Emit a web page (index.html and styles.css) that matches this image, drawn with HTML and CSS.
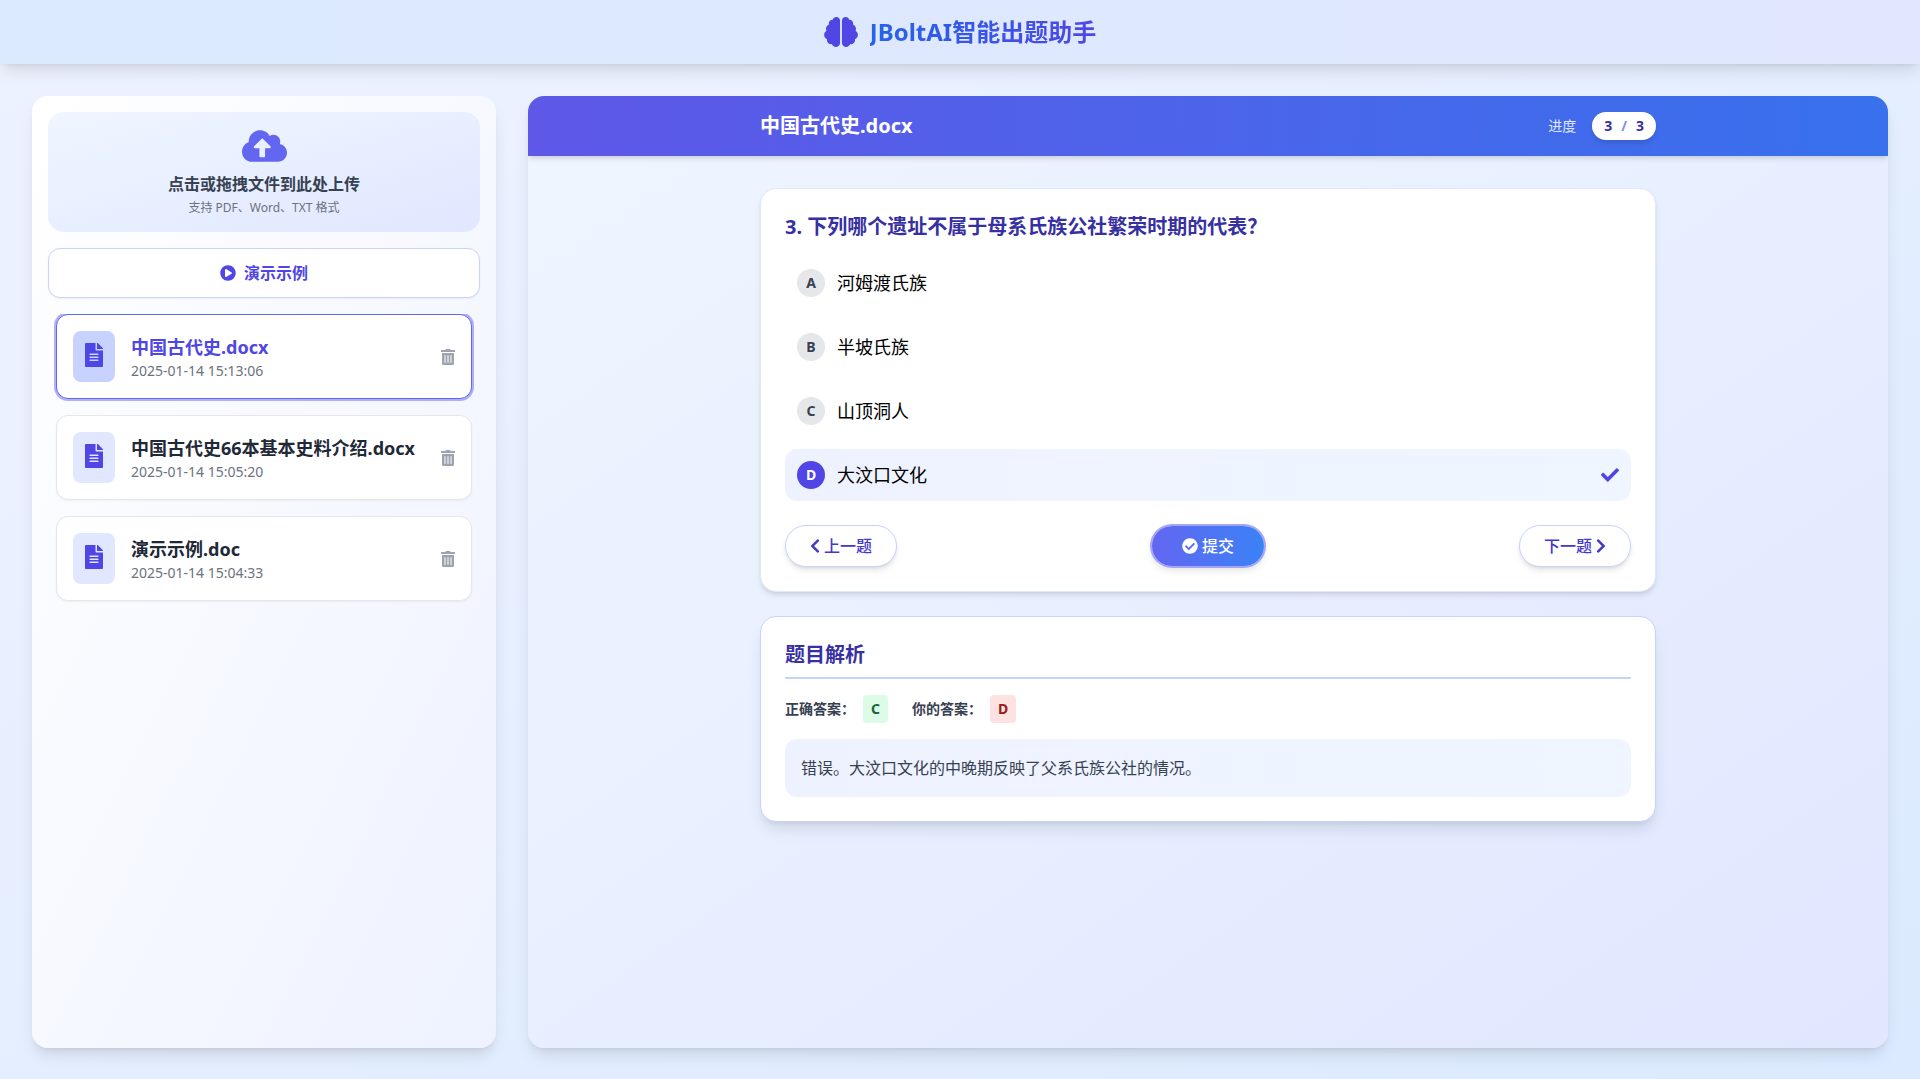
FILE: index.html
```html
<!DOCTYPE html>
<html lang="zh-CN">
<head>
<meta charset="UTF-8">
<meta name="viewport" content="width=device-width, initial-scale=1">
<title>JBoltAI智能出题助手</title>
<link rel="stylesheet" href="styles.css">
</head>
<body>
<svg class="sprite" aria-hidden="true">
  <symbol id="i-file" viewBox="0 0 384 512"><path d="M224 136V0H24C10.700 0 0 10.700 0 24v464c0 13.300 10.700 24 24 24h336c13.300 0 24-10.700 24-24V160H248c-13.200 0-24-10.800-24-24zm64 236c0 6.600-5.400 12-12 12H108c-6.600 0-12-5.400-12-12v-8c0-6.600 5.400-12 12-12h168c6.600 0 12 5.400 12 12v8zm0-64c0 6.600-5.400 12-12 12H108c-6.600 0-12-5.400-12-12v-8c0-6.600 5.400-12 12-12h168c6.600 0 12 5.400 12 12v8zm0-72v8c0 6.600-5.400 12-12 12H108c-6.600 0-12-5.400-12-12v-8c0-6.600 5.400-12 12-12h168c6.600 0 12 5.400 12 12zm96-114.100v6.100H256V0h6.100c6.400 0 12.500 2.500 17 7l97.900 98c4.500 4.500 7 10.600 7 16.900z"/></symbol>
  <symbol id="i-trash" viewBox="0 0 448 512"><path d="M32 464a48 48 0 0 0 48 48h288a48 48 0 0 0 48-48V128H32zm272-256a16 16 0 0 1 32 0v224a16 16 0 0 1-32 0zm-96 0a16 16 0 0 1 32 0v224a16 16 0 0 1-32 0zm-96 0a16 16 0 0 1 32 0v224a16 16 0 0 1-32 0zM432 32H312l-9.400-18.700A24 24 0 0 0 281.100 0H166.800a23.720 23.720 0 0 0-21.400 13.300L136 32H16A16 16 0 0 0 0 48v32a16 16 0 0 0 16 16h416a16 16 0 0 0 16-16V48a16 16 0 0 0-16-16z"/></symbol>
</svg>

<header class="topbar">
  <svg class="topbar-logo" viewBox="0 0 576 512" aria-hidden="true"><path d="M208 0c-29.900 0-54.700 20.500-61.800 48.200-.8 0-1.400-.2-2.200-.2-35.300 0-64 28.700-64 64 0 4.800.6 9.500 1.700 14C52.500 138 32 166.600 32 200c0 12.600 3.200 24.300 8.300 34.900C16.300 248.700 0 274.300 0 304c0 33.300 20.400 61.900 49.400 73.900-.9 4.600-1.400 9.300-1.400 14.100 0 39.800 32.200 72 72 72 4.100 0 8.100-.5 12-1.200 9.600 28.500 36.200 49.200 68 49.200 39.800 0 72-32.200 72-72V64c0-35.300-28.700-64-64-64zm368 304c0-29.700-16.300-55.300-40.300-69.100 5.200-10.600 8.300-22.300 8.300-34.900 0-33.400-20.500-62-49.700-74 1-4.500 1.700-9.200 1.700-14 0-35.300-28.700-64-64-64-.8 0-1.500.2-2.200.2C422.700 20.500 397.900 0 368 0c-35.300 0-64 28.600-64 64v376c0 39.800 32.200 72 72 72 31.800 0 58.400-20.700 68-49.200 3.900.7 7.900 1.200 12 1.200 39.800 0 72-32.200 72-72 0-4.800-.5-9.500-1.400-14.100 29-12 49.400-40.600 49.400-73.900z"/></svg>
  <h1 class="topbar-title">JBoltAI智能出题助手</h1>
</header>

<main class="layout">
  <aside class="sidebar">
    <label class="upload" for="file-input">
      <input class="sr-only" type="file" id="file-input" accept=".pdf,.doc,.docx,.txt">
      <svg class="upload-icon" viewBox="0 0 640 512" aria-hidden="true"><path d="M537.600 226.600c4.100-10.700 6.400-22.400 6.400-34.600 0-53-43-96-96-96-19.700 0-38.100 6-53.300 16.200C367 64.200 315.300 32 256 32c-88.400 0-160 71.600-160 160 0 2.700.1 5.400.2 8.100C40.200 219.800 0 273.200 0 336c0 79.500 64.500 144 144 144h368c70.700 0 128-57.300 128-128 0-61.900-44-113.600-102.400-125.400zM393.400 288H328v112c0 8.800-7.200 16-16 16h-48c-8.800 0-16-7.200-16-16V288h-65.400c-14.300 0-21.400-17.200-11.300-27.300l105.400-105.400c6.200-6.200 16.400-6.200 22.600 0l105.400 105.400c10.100 10.100 2.900 27.300-11.300 27.300z"/></svg>
      <span class="upload-title">点击或拖拽文件到此处上传</span>
      <span class="upload-hint">支持 PDF、Word、TXT 格式</span>
    </label>

    <button class="demo-button" type="button">
      <svg class="icon" viewBox="0 0 512 512" aria-hidden="true"><path d="M256 8C119 8 8 119 8 256s111 248 248 248 248-111 248-248S393 8 256 8zm115.700 272l-176 101c-15.800 8.800-35.700-2.500-35.700-21V152c0-18.400 19.800-29.800 35.700-21l176 107c16.400 9.200 16.400 32.900 0 42z"/></svg>
      演示示例
    </button>

    <ul class="files">
      <li class="file file-active">
        <span class="file-icon"><svg viewBox="0 0 384 512" aria-hidden="true"><use href="#i-file"/></svg></span>
        <div class="file-text">
          <h2 class="file-name">中国古代史.docx</h2>
          <time class="file-date">2025-01-14 15:13:06</time>
        </div>
        <button class="file-delete" type="button" aria-label="删除"><svg viewBox="0 0 448 512" aria-hidden="true"><use href="#i-trash"/></svg></button>
      </li>
      <li class="file">
        <span class="file-icon"><svg viewBox="0 0 384 512" aria-hidden="true"><use href="#i-file"/></svg></span>
        <div class="file-text">
          <h2 class="file-name">中国古代史66本基本史料介绍.docx</h2>
          <time class="file-date">2025-01-14 15:05:20</time>
        </div>
        <button class="file-delete" type="button" aria-label="删除"><svg viewBox="0 0 448 512" aria-hidden="true"><use href="#i-trash"/></svg></button>
      </li>
      <li class="file">
        <span class="file-icon"><svg viewBox="0 0 384 512" aria-hidden="true"><use href="#i-file"/></svg></span>
        <div class="file-text">
          <h2 class="file-name">演示示例.doc</h2>
          <time class="file-date">2025-01-14 15:04:33</time>
        </div>
        <button class="file-delete" type="button" aria-label="删除"><svg viewBox="0 0 448 512" aria-hidden="true"><use href="#i-trash"/></svg></button>
      </li>
    </ul>
  </aside>

  <section class="quiz">
    <header class="quiz-header">
      <div class="container quiz-header-row">
        <h2 class="quiz-title">中国古代史.docx</h2>
        <div class="progress">
          <span class="progress-label">进度</span>
          <span class="progress-pill"><span>3</span><span class="progress-slash">/</span><span>3</span></span>
        </div>
      </div>
    </header>

    <div class="container quiz-body">
      <form class="card">
        <h3 class="card-title" id="question">3. 下列哪个遗址不属于母系氏族公社繁荣时期的代表？</h3>
        <div class="options" role="radiogroup" aria-labelledby="question">
          <label class="option" for="opt-a">
            <input class="sr-only" type="radio" name="answer" id="opt-a">
            <span class="option-key">A</span>
            <span class="option-text">河姆渡氏族</span>
          </label>
          <label class="option" for="opt-b">
            <input class="sr-only" type="radio" name="answer" id="opt-b">
            <span class="option-key">B</span>
            <span class="option-text">半坡氏族</span>
          </label>
          <label class="option" for="opt-c">
            <input class="sr-only" type="radio" name="answer" id="opt-c">
            <span class="option-key">C</span>
            <span class="option-text">山顶洞人</span>
          </label>
          <label class="option option-selected" for="opt-d">
            <input class="sr-only" type="radio" name="answer" id="opt-d" checked>
            <span class="option-key">D</span>
            <span class="option-text">大汶口文化</span>
            <svg class="option-check" viewBox="0 0 512 512" aria-hidden="true"><path d="M173.898 439.404l-166.400-166.400c-9.997-9.997-9.997-26.206 0-36.204l36.203-36.204c9.997-9.998 26.207-9.998 36.204 0L192 312.690 432.095 72.596c9.997-9.997 26.207-9.997 36.204 0l36.203 36.204c9.997 9.997 9.997 26.206 0 36.204l-294.400 294.401c-9.998 9.997-26.207 9.997-36.204-.001z"/></svg>
          </label>
        </div>
        <div class="actions">
          <button class="button" type="button">
            <svg class="icon-chevron" viewBox="0 0 320 512" aria-hidden="true"><path d="M34.520 239.030L228.870 44.690c9.370-9.370 24.570-9.370 33.940 0l22.670 22.670c9.360 9.360 9.370 24.520.04 33.900L131.490 256l154.020 154.750c9.340 9.380 9.320 24.540-.04 33.900l-22.670 22.670c-9.370 9.370-24.570 9.370-33.940 0L34.520 272.970c-9.370-9.370-9.370-24.570 0-33.940z"/></svg>
            上一题
          </button>
          <button class="button button-primary" type="button">
            <svg class="icon" viewBox="0 0 512 512" aria-hidden="true"><path d="M504 256c0 136.967-111.033 248-248 248S8 392.967 8 256 119.033 8 256 8s248 111.033 248 248zM227.314 387.314l184-184c6.248-6.248 6.248-16.379 0-22.627l-22.627-22.627c-6.248-6.248-16.379-6.249-22.628 0L216 308.118l-70.059-70.059c-6.248-6.248-16.379-6.248-22.628 0l-22.627 22.627c-6.248 6.248-6.248 16.379 0 22.627l104 104c6.249 6.249 16.379 6.249 22.628.001z"/></svg>
            提交
          </button>
          <button class="button" type="button">
            下一题
            <svg class="icon-chevron" viewBox="0 0 320 512" aria-hidden="true"><path d="M285.480 272.970L91.130 467.310c-9.370 9.370-24.570 9.370-33.940 0l-22.670-22.670c-9.360-9.360-9.370-24.520-.04-33.900L188.510 256 34.490 101.250c-9.340-9.380-9.320-24.540.04-33.900l22.670-22.670c9.370-9.370 24.570-9.370 33.940 0L285.480 239.030c9.370 9.370 9.370 24.570 0 33.940z"/></svg>
          </button>
        </div>
      </form>

      <section class="card card-analysis">
        <h3 class="card-title card-title-ruled">题目解析</h3>
        <dl class="answers">
          <div class="answer">
            <dt>正确答案：</dt>
            <dd class="answer-value answer-right">C</dd>
          </div>
          <div class="answer">
            <dt>你的答案：</dt>
            <dd class="answer-value answer-wrong">D</dd>
          </div>
        </dl>
        <p class="explanation">错误。大汶口文化的中晚期反映了父系氏族公社的情况。</p>
      </section>
    </div>
  </section>
</main>
</body>
</html>
```
FILE: styles.css
```css
*, *::before, *::after { box-sizing: border-box; }

body {
  display: flex;
  flex-direction: column;
  min-height: 100vh;
  margin: 0;
  background: linear-gradient(to bottom right, #eef2ff, #dbeafe);
  color: #000;
  font-family: "Noto Sans", "Noto Sans CJK SC", sans-serif;
  font-size: 16px;
  line-height: 24px;
}

h1, h2, h3, p, ul, dl, dd { margin: 0; padding: 0; }

button {
  font: inherit;
  cursor: pointer;
}

svg {
  display: block;
  flex: none;
  fill: currentColor;
}

.sprite { display: none; }

.sr-only {
  position: absolute;
  width: 1px;
  height: 1px;
  margin: 0;
  overflow: hidden;
  opacity: 0;
}

.icon {
  width: 16px;
  height: 16px;
}

.icon-chevron {
  width: 10px;
  height: 16px;
}

/* Top bar */
.topbar {
  display: flex;
  align-items: center;
  justify-content: center;
  gap: 12px;
  padding: 16px;
  background: linear-gradient(to right, #dbeafe, #e0e7ff);
  box-shadow: 0 10px 15px -3px rgba(0, 0, 0, 0.1), 0 4px 6px -4px rgba(0, 0, 0, 0.1);
}

.topbar-logo {
  width: 34px;
  height: 30px;
  color: #4f46e5;
}

.topbar-title {
  background: linear-gradient(to right, #2563eb, #4f46e5);
  background-clip: text;
  -webkit-background-clip: text;
  color: transparent;
  font-size: 24px;
  font-weight: 700;
  line-height: 32px;
}

.layout {
  display: flex;
  flex: 1;
  gap: 32px;
  padding: 32px 32px 31px;
}

/* Sidebar */
.sidebar {
  display: flex;
  flex: none;
  flex-direction: column;
  gap: 16px;
  width: 25%;
  padding: 16px;
  border-radius: 16px;
  background: linear-gradient(to bottom right, #fff, #eef2ff);
  box-shadow: 0 10px 15px -3px rgba(0, 0, 0, 0.1), 0 4px 6px -4px rgba(0, 0, 0, 0.1);
}

.upload {
  display: flex;
  flex-direction: column;
  align-items: center;
  padding: 16px;
  border-radius: 16px;
  background: linear-gradient(to bottom right, #eff6ff, #e0e7ff);
  cursor: pointer;
}

.upload-icon {
  width: 45px;
  height: 36px;
  margin-bottom: 8px;
  color: #6366f1;
}

.upload-title {
  margin-bottom: 4px;
  color: #374151;
  font-weight: 600;
}

.upload-hint {
  color: #6b7280;
  font-size: 12px;
  line-height: 16px;
}

.demo-button {
  display: flex;
  align-items: center;
  justify-content: center;
  gap: 8px;
  padding: 12px 16px;
  border: 1px solid #c7d2fe;
  border-radius: 12px;
  background: #fff;
  box-shadow: 0 1px 2px rgba(0, 0, 0, 0.05);
  color: #4f46e5;
  font-weight: 600;
}

.files {
  display: flex;
  flex: 1;
  flex-direction: column;
  gap: 16px;
  padding: 0 8px;
  overflow-y: auto;
  list-style: none;
}

.file {
  display: flex;
  align-items: center;
  gap: 16px;
  padding: 16px;
  border: 1px solid #e5e7eb;
  border-radius: 12px;
  background: #fff;
  box-shadow: 0 1px 2px rgba(0, 0, 0, 0.05);
}

.file-icon {
  padding: 12px 12px 15px;
  border-radius: 8px;
  background: #e0e7ff;
  color: #4f46e5;
}

.file-icon svg {
  width: 18px;
  height: 24px;
}

.file-text {
  flex: 1;
  min-width: 0;
}

.file-name {
  overflow: hidden;
  color: #1f2937;
  font-size: 18px;
  font-weight: 700;
  line-height: 28px;
  text-overflow: ellipsis;
  white-space: nowrap;
}

.file-date {
  display: block;
  color: #6b7280;
  font-size: 14px;
  line-height: 20px;
}

.file-delete {
  padding: 0;
  border: 0;
  background: none;
  color: #9ca3af;
}

.file-delete svg {
  width: 14px;
  height: 16px;
}

.file-active {
  border-color: #6366f1;
  box-shadow: 0 0 0 2px rgba(99, 102, 241, 0.5);
}

.file-active .file-icon { background: #c7d2fe; }
.file-active .file-name { color: #4f46e5; }

/* Quiz panel */
.quiz {
  flex: 1;
  min-width: 0;
  overflow: hidden;
  border-radius: 16px;
  background: linear-gradient(to bottom right, #eff6ff, #e0e7ff);
  box-shadow: 0 10px 15px -3px rgba(0, 0, 0, 0.1), 0 4px 6px -4px rgba(0, 0, 0, 0.1);
}

.container {
  width: 100%;
  max-width: 896px;
  margin: 0 auto;
}

.quiz-header {
  padding: 16px;
  background: linear-gradient(to right, rgba(79, 70, 229, 0.9), rgba(37, 99, 235, 0.9));
  box-shadow: 0 4px 6px -1px rgba(0, 0, 0, 0.1), 0 2px 4px -2px rgba(0, 0, 0, 0.1);
  color: #fff;
}

.quiz-header-row {
  display: flex;
  align-items: center;
  justify-content: space-between;
}

.quiz-title {
  font-size: 20px;
  font-weight: 700;
  line-height: 28px;
}

.progress {
  display: flex;
  align-items: center;
  gap: 16px;
  font-size: 14px;
  line-height: 20px;
}

.progress-label { color: #e0e7ff; }

.progress-pill {
  display: flex;
  gap: 9px;
  padding: 4px 12px;
  border-radius: 14px;
  background: #fff;
  box-shadow: 0 4px 6px -1px rgba(0, 0, 0, 0.1), 0 2px 4px -2px rgba(0, 0, 0, 0.1);
  color: #3730a3;
  font-weight: 700;
}

.progress-slash { color: #818cf8; }

.quiz-body {
  display: flex;
  flex-direction: column;
  gap: 24px;
  padding: 32px 0;
}

.card {
  padding: 24px;
  border: 1px solid #e0e7ff;
  border-radius: 16px;
  background: #fff;
  box-shadow: 0 4px 6px -1px rgba(0, 0, 0, 0.1), 0 2px 4px -2px rgba(0, 0, 0, 0.1);
}

.card-analysis {
  border-color: #c7d2fe;
  box-shadow: 0 10px 15px -3px rgba(0, 0, 0, 0.1), 0 4px 6px -4px rgba(0, 0, 0, 0.1);
}

.card-title {
  margin-bottom: 16px;
  color: #3730a3;
  font-size: 20px;
  font-weight: 700;
  line-height: 28px;
}

.card-title-ruled {
  padding-bottom: 8px;
  border-bottom: 2px solid #c7d2fe;
}

.options {
  display: flex;
  flex-direction: column;
  gap: 12px;
}

.option {
  display: flex;
  align-items: center;
  gap: 12px;
  padding: 12px;
  border-radius: 12px;
  cursor: pointer;
}

.option-selected { background: linear-gradient(to right, #eef2ff, #eff6ff); }

.option-key {
  width: 28px;
  border-radius: 50%;
  background: #e5e7eb;
  color: #374151;
  font-size: 14px;
  font-weight: 700;
  line-height: 28px;
  text-align: center;
}

.option-selected .option-key {
  background: #4f46e5;
  color: #fff;
}

.option-text {
  flex: 1;
  font-size: 18px;
  line-height: 28px;
}

.option-check {
  width: 18px;
  height: 18px;
  color: #4f46e5;
}

.actions {
  display: flex;
  align-items: center;
  justify-content: space-between;
  margin-top: 24px;
}

.button {
  display: flex;
  align-items: center;
  justify-content: center;
  gap: 4px;
  min-width: 112px;
  padding: 8px 24px;
  border: 1px solid #c7d2fe;
  border-radius: 21px;
  background: #fff;
  box-shadow: 0 4px 6px -1px rgba(0, 0, 0, 0.1), 0 2px 4px -2px rgba(0, 0, 0, 0.1);
  color: #4338ca;
  font-weight: 500;
}

.button-primary {
  border: 0;
  background: linear-gradient(to right, #6366f1, #3b82f6);
  box-shadow: 0 0 0 2px #a5a5f5, 0 4px 6px 1px rgba(0, 0, 0, 0.1);
  color: #fff;
}

.answers {
  display: flex;
  gap: 24px;
  margin-bottom: 16px;
  font-size: 14px;
  font-weight: 700;
  line-height: 20px;
}

.answer {
  display: flex;
  align-items: center;
  gap: 8px;
  color: #374151;
}

.answer-value {
  padding: 4px 8px;
  border-radius: 4px;
}

.answer-right {
  background: #dcfce7;
  color: #166534;
}

.answer-wrong {
  background: #fee2e2;
  color: #991b1b;
}

.explanation {
  padding: 16px;
  border-radius: 12px;
  background: linear-gradient(to right, #eef2ff, #eff6ff);
  color: #374151;
  line-height: 26px;
}
```
